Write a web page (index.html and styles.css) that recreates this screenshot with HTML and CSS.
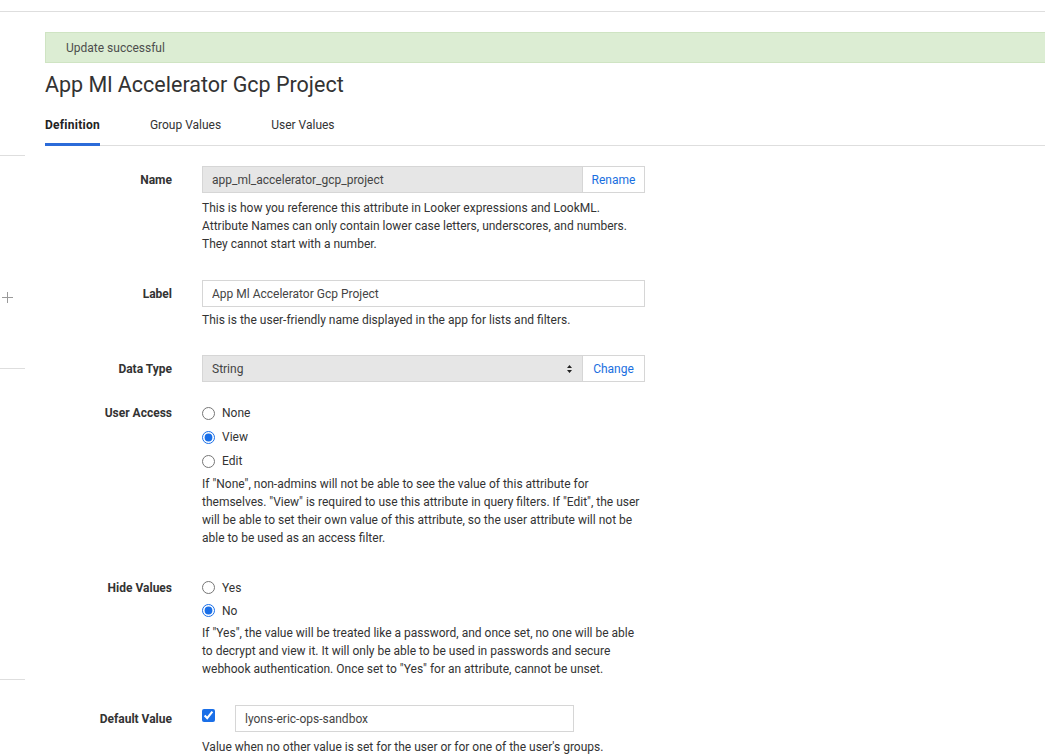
FILE: index.html
```html
<!DOCTYPE html>
<html>
<head>
<meta charset="utf-8">
<link rel="stylesheet" href="styles.css">
</head>
<body>
<div class="topbar"></div>
<div class="page">
  <aside class="rail">
    <div class="rail-gap g1"></div>
    <div class="rail-line"></div>
    <div class="rail-gap g2"></div>
    <svg class="plus" width="11" height="11" viewBox="0 0 11 11"><path d="M5.5 0V11M0 5.5H11" stroke="#9a9a9a" stroke-width="1"/></svg>
    <div class="rail-gap g3"></div>
    <div class="rail-line"></div>
    <div class="rail-gap g4"></div>
    <div class="rail-line"></div>
  </aside>
  <main class="main">
    <div class="banner">Update successful</div>
    <h1 class="title">App Ml Accelerator Gcp Project</h1>
    <nav class="tabs">
      <span class="tab active">Definition</span>
      <span class="tab">Group Values</span>
      <span class="tab">User Values</span>
    </nav>
    <form class="form">
      <div class="row r-name">
        <label class="lbl lbl-input">Name</label>
        <div class="field">
          <div class="group">
            <input class="input readonly grow" type="text" value="app_ml_accelerator_gcp_project" readonly>
            <button type="button" class="btn">Rename</button>
          </div>
          <p class="help h-name">This is how you reference this attribute in Looker expressions and LookML.<br>Attribute Names can only contain lower case letters, underscores, and numbers.<br>They cannot start with a number.</p>
        </div>
      </div>
      <div class="row r-label">
        <label class="lbl lbl-input">Label</label>
        <div class="field">
          <input class="input full" type="text" value="App Ml Accelerator Gcp Project">
          <p class="help h-label">This is the user-friendly name displayed in the app for lists and filters.</p>
        </div>
      </div>
      <div class="row r-type">
        <label class="lbl lbl-input">Data Type</label>
        <div class="field">
          <div class="group">
            <div class="select grow">
              <span>String</span>
              <svg class="arrows" width="5" height="8" viewBox="0 0 5 8"><path d="M2.5 0L5 3H0Z M2.5 8L5 5H0Z" fill="#222"/></svg>
            </div>
            <button type="button" class="btn">Change</button>
          </div>
        </div>
      </div>
      <div class="row r-access">
        <label class="lbl lbl-radio">User Access</label>
        <div class="field">
          <label class="radio"><input type="radio" name="access"><span>None</span></label>
          <label class="radio"><input type="radio" name="access" checked><span>View</span></label>
          <label class="radio"><input type="radio" name="access"><span>Edit</span></label>
          <p class="help h-access">If "None", non-admins will not be able to see the value of this attribute for<br>themselves. "View" is required to use this attribute in query filters. If "Edit", the user<br>will be able to set their own value of this attribute, so the user attribute will not be<br>able to be used as an access filter.</p>
        </div>
      </div>
      <div class="row r-hide">
        <label class="lbl lbl-radio">Hide Values</label>
        <div class="field">
          <label class="radio r23"><input type="radio" name="hide"><span>Yes</span></label>
          <label class="radio r23"><input type="radio" name="hide" checked><span>No</span></label>
          <p class="help h-hide">If "Yes", the value will be treated like a password, and once set, no one will be able<br>to decrypt and view it. It will only be able to be used in passwords and secure<br>webhook authentication. Once set to "Yes" for an attribute, cannot be unset.</p>
        </div>
      </div>
      <div class="row r-default">
        <label class="lbl lbl-input">Default Value</label>
        <div class="field">
          <div class="defgroup">
            <input type="checkbox" class="check" checked>
            <input class="input def" type="text" value="lyons-eric-ops-sandbox">
          </div>
          <p class="help h-default">Value when no other value is set for the user or for one of the user's groups.</p>
        </div>
      </div>
    </form>
  </main>
</div>
</body>
</html>
```

FILE: styles.css
```css
* { box-sizing: border-box; }
html, body { margin: 0; padding: 0; }
body {
  font-family: Roboto, "Liberation Sans", Arial, sans-serif;
  color: #333;
  background: #fff;
  overflow: hidden;
  width: 1045px;
  height: 755px;
}
.topbar {
  height: 12px;
  border-bottom: 1px solid #dedede;
}
.page {
  display: flex;
  align-items: flex-start;
}
.rail {
  width: 25px;
  flex: none;
  display: flex;
  flex-direction: column;
}
.rail-line { height: 1px; background: #dedede; }
.g1 { height: 143px; }
.g2 { height: 136px; }
.g3 { height: 65px; }
.g4 { height: 310px; }
.plus { margin-left: 2px; display: block; }
.main {
  flex: 1;
  padding-left: 20px;
  margin-right: -20px;
  min-width: 0;
}
.banner {
  margin-top: 20px;
  height: 31px;
  line-height: 30px;
  background: #dcedd3;
  border: 1px solid #cfe4c3;
  padding-left: 20px;
  font-size: 12px;
  color: #4d4d4d;
}
.title {
  margin: 7px 0 0;
  font-size: 21.5px;
  line-height: 30px;
  font-weight: 400;
  color: #333;
}
.tabs {
  margin-top: 17px;
  display: flex;
  gap: 50px;
  border-bottom: 1px solid #dedede;
}
.tab {
  font-size: 12px;
  line-height: 16px;
  padding-bottom: 10px;
  color: #333;
  border-bottom: 3px solid transparent;
  margin-bottom: -1px;
}
.tab.active {
  font-weight: 700;
  letter-spacing: 0.25px;
  color: #222;
  border-bottom-color: #2b6bd9;
}
.form { margin: 0; }
.row {
  display: grid;
  grid-template-columns: 127px 443px;
  column-gap: 30px;
  align-items: start;
}
.r-name { margin-top: 20px; }
.r-label { margin-top: 27px; }
.r-type { margin-top: 26px; }
.r-access { margin-top: 18px; }
.r-hide { margin-top: 29px; }
.r-default { margin-top: 27px; }
.lbl {
  text-align: right;
  font-size: 12px;
  font-weight: 700;
  color: #333;
}
.lbl-input { line-height: 28px; }
.lbl-radio { line-height: 24px; }
.group { display: flex; }
.grow { flex: 1; }
.input {
  height: 27px;
  border: 1px solid #d6d6d6;
  border-radius: 0;
  padding: 0 9px;
  font-family: inherit;
  font-size: 12px;
  color: #444;
  background: #fff;
  outline: none;
  display: block;
}
.input.readonly { background: #e6e6e6; }
.input.full { width: 100%; }
.btn {
  width: 62px;
  height: 27px;
  border: 1px solid #d6d6d6;
  border-left: none;
  background: #fff;
  color: #1a6fe0;
  font-family: inherit;
  font-size: 12px;
  padding: 0;
  border-radius: 0;
}
.select {
  height: 27px;
  background: #e6e6e6;
  border: 1px solid #d6d6d6;
  display: flex;
  align-items: center;
  justify-content: space-between;
  padding: 0 10px 0 9px;
  font-size: 12px;
  color: #444;
}
.help {
  margin: 5px 0 0;
  font-size: 12px;
  line-height: 18px;
  color: #333;
}
.h-name { margin-top: 6px; }
.h-label { margin-top: 4px; }
.h-access { margin-top: 2px; }
.h-hide { margin-top: 2px; }
.h-default { margin-top: 6px; }
.radio {
  display: flex;
  align-items: center;
  height: 24px;
  font-size: 12px;
  color: #333;
}
.radio.r23 { height: 23px; }
.radio input {
  margin: 0 7px 0 0;
  width: 13px;
  height: 13px;
  accent-color: #1a6fe8;
}
.defgroup {
  display: flex;
  align-items: center;
  gap: 20px;
}
.check {
  margin: -7px 0 0 0;
  width: 13px;
  height: 13px;
  accent-color: #1a6fe8;
}
.input.def { width: 339px; }
```
